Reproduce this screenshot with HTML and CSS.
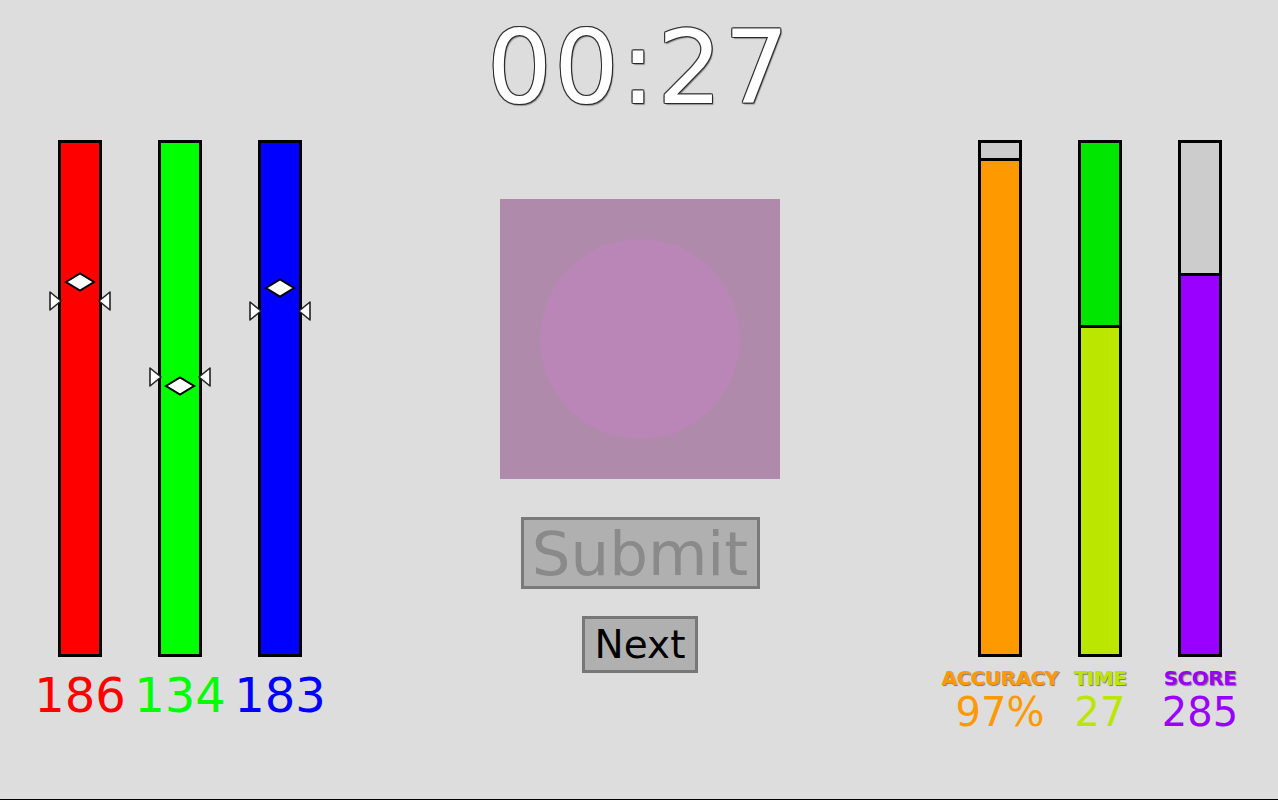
FILE: index.html
```html
<!DOCTYPE html>
<html>
<head>
<meta charset="utf-8">
<title>Color Match</title>
<link rel="stylesheet" href="styles.css">
</head>
<body>
<div class="app">
  <div class="timer">00:27</div>
  <div class="main">
    <div class="group sliders">
      <div class="col">
        <div class="bar red">
          <svg class="target" style="--v:176" width="62" height="20" viewBox="0 0 62 20"><polygon points="1,1 12,10 1,19" /><polygon points="61,1 50,10 61,19" /></svg>
          <svg class="thumb" style="--v:186" width="30" height="20" viewBox="0 0 30 20"><polygon points="1,10 15,1.5 29,10 15,18.5" /></svg>
        </div>
        <div class="num red-t">186</div>
      </div>
      <div class="col">
        <div class="bar green">
          <svg class="target" style="--v:138" width="62" height="20" viewBox="0 0 62 20"><polygon points="1,1 12,10 1,19" /><polygon points="61,1 50,10 61,19" /></svg>
          <svg class="thumb" style="--v:134" width="30" height="20" viewBox="0 0 30 20"><polygon points="1,10 15,1.5 29,10 15,18.5" /></svg>
        </div>
        <div class="num green-t">134</div>
      </div>
      <div class="col">
        <div class="bar blue">
          <svg class="target" style="--v:171" width="62" height="20" viewBox="0 0 62 20"><polygon points="1,1 12,10 1,19" /><polygon points="61,1 50,10 61,19" /></svg>
          <svg class="thumb" style="--v:183" width="30" height="20" viewBox="0 0 30 20"><polygon points="1,10 15,1.5 29,10 15,18.5" /></svg>
        </div>
        <div class="num blue-t">183</div>
      </div>
    </div>

    <div class="center">
      <div class="swatch"><div class="circle"></div></div>
      <button class="submit" disabled>Submit</button>
      <button class="next">Next</button>
    </div>

    <div class="group stats">
      <div class="col">
        <div class="bar stat empty"><div class="fill acc" style="height:97%"></div></div>
        <div class="label acc-t">ACCURACY</div>
        <div class="stat-num acc-t">97%</div>
      </div>
      <div class="col">
        <div class="bar stat green-empty"><div class="fill time" style="height:64.4%"></div></div>
        <div class="label time-t">TIME</div>
        <div class="stat-num time-t">27</div>
      </div>
      <div class="col">
        <div class="bar stat empty"><div class="fill score" style="height:74.6%"></div></div>
        <div class="label score-t">SCORE</div>
        <div class="stat-num score-t">285</div>
      </div>
    </div>
  </div>
</div>
</body>
</html>
```
FILE: styles.css
```css
html, body {
  margin: 0;
  padding: 0;
}
body {
  background: #dddddd;
  font-family: "DejaVu Sans", Verdana, sans-serif;
}
.app {
  height: 800px;
  box-sizing: border-box;
  border-bottom: 1px solid #000;
  overflow: hidden;
}
.timer {
  padding-top: 16px;
  height: 103px;
  font-size: 102px;
  line-height: 103px;
  letter-spacing: 2px;
  text-align: center;
  color: #ffffff;
  text-shadow: -1px 0 #2a2a2a, 1px 0 #2a2a2a, 0 -1px #2a2a2a, 0 1px #2a2a2a,
    -1px -1px #666, 1px 1px #444, -1px 1px #666, 1px -1px #666,
    1.5px 1.5px 1px rgba(0, 0, 0, 0.35);
}
.main {
  margin-top: 21px;
  display: flex;
  justify-content: space-between;
  padding: 0 28px 0 30px;
}
.group {
  display: flex;
}
.col {
  width: 100px;
  display: flex;
  flex-direction: column;
  align-items: center;
}
.bar {
  width: 44px;
  height: 517px;
  box-sizing: border-box;
  border: 3px solid #000;
  position: relative;
}
.red { background: #ff0000; }
.green { background: #00ff00; }
.blue { background: #0000ff; }

.thumb, .target {
  position: absolute;
  top: calc(100% - var(--v) / 255 * 100%);
  transform: translateY(-50%);
  overflow: visible;
}
.thumb {
  left: 4px;
  top: calc(100% - var(--v) / 255 * 100% + 1px);
}
.target {
  left: -12px;
}
.thumb polygon {
  fill: #ffffff;
  stroke: #000;
  stroke-width: 2;
  stroke-linejoin: miter;
}
.target polygon {
  fill: #ffffff;
  stroke: #222;
  stroke-width: 1.6;
  stroke-linejoin: round;
}

.num {
  margin-top: 14px;
  font-size: 48px;
  line-height: 1;
}
.red-t { color: #ff0000; }
.green-t { color: #00ff00; }
.blue-t { color: #0000ff; }

.center {
  display: flex;
  flex-direction: column;
  align-items: center;
}
.swatch {
  margin-top: 59px;
  width: 280px;
  height: 280px;
  background: rgb(176, 138, 171);
  display: flex;
  align-items: center;
  justify-content: center;
}
.circle {
  width: 200px;
  height: 200px;
  border-radius: 50%;
  background: rgb(186, 134, 183);
}
.submit, .next {
  font-family: "DejaVu Sans", Verdana, sans-serif;
  padding: 0;
  box-sizing: border-box;
  background: #b0b0b0;
  border: 3px solid #7a7a7a;
  line-height: 1;
  display: flex;
  align-items: center;
  justify-content: center;
}
.submit {
  margin-top: 38px;
  width: 239px;
  height: 72px;
  font-size: 61px;
  color: #8a8a8a;
}
.next {
  margin-top: 27px;
  width: 116px;
  height: 57px;
  font-size: 39px;
  color: #000;
  border-color: #777;
}

.stat {
  display: flex;
  flex-direction: column;
  justify-content: flex-end;
}
.empty { background: #cccccc; }
.green-empty { background: #00e600; }
.fill {
  box-sizing: border-box;
  border-top: 3px solid #000;
  flex-shrink: 0;
}
.acc { background: #ff9900; }
.time { background: #bbe600; }
.score { background: #9900ff; }

.label {
  margin-top: 11px;
  font-size: 20px;
  font-weight: bold;
  line-height: 20px;
  white-space: nowrap;
  letter-spacing: -0.5px;
  text-shadow: 1px 1px 1px rgba(0, 0, 0, 0.45);
}
.stat-num {
  margin-top: 4px;
  font-size: 40px;
  line-height: 1;
}
.acc-t { color: #ff9900; }
.time-t { color: #bbe600; }
.score-t { color: #9900ff; }
```
